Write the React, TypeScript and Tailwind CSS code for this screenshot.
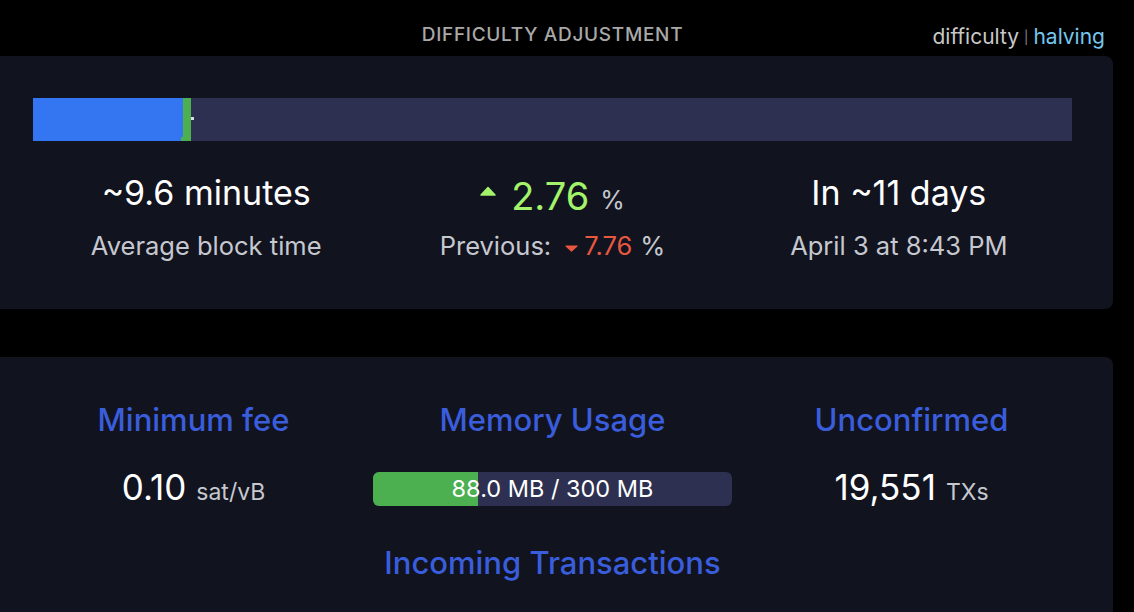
import React from "react";

const font = { fontFamily: "Inter, 'Noto Sans', sans-serif" };

function UpTri() {
  return (
    <svg width="16" height="10" viewBox="0 0 16 10" className="mr-[15px] mb-[10px]">
      <path d="M1 9 L8 1.5 L15 9 Z" fill="#a3f36b" stroke="#a3f36b" strokeLinejoin="round" strokeWidth="1.5" />
    </svg>
  );
}

function DownTri() {
  return (
    <svg width="13" height="7" viewBox="0 0 13 7" className="ml-[14px] mr-[6px] mt-[4px]">
      <path d="M1 1 L6.5 6 L12 1 Z" fill="#e9573f" stroke="#e9573f" strokeLinejoin="round" strokeWidth="1.2" />
    </svg>
  );
}

export default function App() {
  return (
    <div className="w-[1134px] h-[612px] overflow-hidden bg-black text-white" style={font}>
      {/* header */}
      <div className="relative h-[56px] mr-[21px] -ml-[8px]">
        <div className="absolute inset-x-0 top-[22px] text-center text-[19px] font-medium tracking-[0.7px] text-[#a9a9a9] leading-[26px]">
          DIFFICULTY ADJUSTMENT
        </div>
        <div className="absolute right-[8px] top-[24px] text-[21px] leading-[26px] flex items-center">
          <span className="text-[#c8c8c8]">difficulty</span>
          <span className="text-[#8a8a8a] text-[13px] mx-[5px]">|</span>
          <span className="text-[#74c6ef]">halving</span>
        </div>
      </div>

      {/* difficulty card */}
      <div className="-ml-[8px] mr-[21px] rounded-[8px] bg-[#11131f] px-[41px] pt-[42px] pb-[48px]">
        <div className="relative h-[43px] bg-[#2d3050]">
          <div className="absolute left-0 top-0 h-full w-[150px] bg-[#3476f1]" />
          <div className="absolute left-[150px] top-0 h-full w-[8px] bg-[#4caf50]" />
          <div className="absolute left-[148px] bottom-0 h-[4px] w-[3px] bg-[#4caf50]" />
          <div className="absolute left-[158px] top-[19px] h-[3px] w-[3px] bg-[#dcdcdc]" />
        </div>
        <div className="grid grid-cols-3 mt-[32px] text-center">
          <div className="flex flex-col items-center">
            <div className="text-[34px] leading-[40px]">~9.6 minutes</div>
            <div className="text-[25.5px] leading-[30px] mt-[18px] text-[#c6c8cf]">Average block time</div>
          </div>
          <div className="flex flex-col items-center">
            <div className="flex items-center h-[40px] mt-[3px]">
              <UpTri />
              <span className="text-[38px] text-[#a3f36b] leading-[44px]">2.76</span>
              <span className="text-[25px] text-[#c6c8cf] ml-[11px] mt-[10px]">%</span>
            </div>
            <div className="flex items-center text-[25.5px] leading-[30px] mt-[15px] text-[#c6c8cf]">
              <span>Previous:</span>
              <DownTri />
              <span className="text-[#e9573f]">7.76</span>
              <span className="ml-[8px]">%</span>
            </div>
          </div>
          <div className="flex flex-col items-center">
            <div className="text-[34px] leading-[40px]">In ~11 days</div>
            <div className="text-[25.5px] leading-[30px] mt-[18px] text-[#c6c8cf]">April 3 at 8:43 PM</div>
          </div>
        </div>
      </div>

      {/* mempool card */}
      <div className="-ml-[8px] mr-[21px] mt-[48px] rounded-[8px] bg-[#11131f] px-[22px] pt-[45px] pb-[40px]">
        <div className="grid grid-cols-3 text-center">
          <div className="flex flex-col items-center">
            <div className="text-[31px] leading-[36px] font-medium text-[#3a5ddc]">Minimum fee</div>
            <div className="flex items-baseline mt-[30px] h-[38px]">
              <span className="text-[35px] leading-[38px]">0.10</span>
              <span className="text-[23px] ml-[10px] text-[#c6c8cf]">sat/vB</span>
            </div>
          </div>
          <div className="flex flex-col items-center">
            <div className="text-[31px] leading-[36px] font-medium text-[#3a5ddc]">Memory Usage</div>
            <div className="relative mt-[34px] w-[359px] h-[34px] rounded-[6px] bg-[#2d3050] overflow-hidden">
              <div className="absolute left-0 top-0 h-full w-[105px] bg-[#4caf50]" />
              <div className="relative text-[23.5px] leading-[34px] text-white">88.0 MB / 300 MB</div>
            </div>
          </div>
          <div className="flex flex-col items-center">
            <div className="text-[31px] leading-[36px] font-medium text-[#3a5ddc]">Unconfirmed</div>
            <div className="flex items-baseline mt-[30px] h-[38px]">
              <span className="text-[35px] leading-[38px]">19,551</span>
              <span className="text-[23px] ml-[10px] text-[#c6c8cf]">TXs</span>
            </div>
          </div>
        </div>
        <div className="text-center mt-[39px] text-[31px] leading-[36px] font-medium text-[#3a5ddc]">
          Incoming Transactions
        </div>
        <div className="h-[60px]" />
      </div>
    </div>
  );
}
